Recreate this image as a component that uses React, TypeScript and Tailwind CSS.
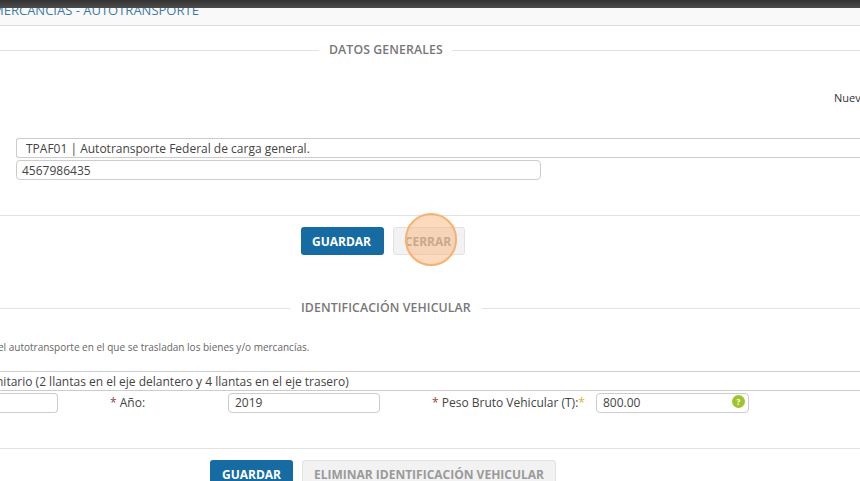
import React from 'react';

const Legend = ({ title, left, right }: { title: string; left: string; right: string }) => (
  <div className="flex items-center h-[20px]">
    <div className={`${left} h-px bg-[#e2e2e2]`}></div>
    <span className="text-[12.3px] font-semibold text-[#777777] whitespace-nowrap tracking-[0.1px]">{title}</span>
    <div className={`${right} h-px bg-[#e2e2e2] flex-1`}></div>
  </div>
);

const App: React.FC = () => {
  return (
    <div className="relative w-[860px] h-[481px] overflow-hidden bg-white text-[#444444] font-['Open_Sans',sans-serif]">
      {/* barra superior */}
      <div className="h-[8px] bg-gradient-to-b from-[#333333] to-[#4b4b4b]"></div>

      {/* encabezado */}
      <div className="h-[18px] overflow-hidden bg-[#f9f9f9] border-b border-[#dddddd]">
        <div className="-mt-[8px] -ml-[8px] text-[13px] leading-[20px] text-[#3d7ba6] whitespace-nowrap">
          MERCANCIAS - AUTOTRANSPORTE
        </div>
      </div>

      {/* datos generales */}
      <div className="mt-[14px]">
        <Legend title="DATOS GENERALES" left="w-[319px] mr-[10px]" right="ml-[9px]" />
      </div>
      <div className="mt-[30px] pl-[834px] text-[11px] leading-[16px] text-[#333333] whitespace-nowrap overflow-hidden">Nuevo</div>

      <div className="mt-[32px] ml-[16px] h-[20px] pl-[9px] pt-[2px] flex items-center border border-r-0 border-[#cccccc] rounded-l-[3px] text-[12px] text-[#444444] whitespace-nowrap">
        TPAF01 | Autotransporte Federal de carga general.
      </div>
      <div className="mt-[2px] ml-[16px] w-[525px] h-[20px] pl-[5px] pt-[2px] flex items-center border border-[#cccccc] rounded-[4px] text-[12px] text-[#444444]">
        4567986435
      </div>

      <div className="mt-[35px] h-px bg-[#e2e2e2]"></div>

      <div className="mt-[11px] flex pl-[301px] gap-[9px]">
        <button className="w-[83px] h-[28px] pt-[1px] pr-[2px] rounded-[3px] bg-[#166ba3] text-white text-[12px] font-bold">GUARDAR</button>
        <button className="w-[72px] h-[28px] pt-[1px] pr-[2px] rounded-[3px] bg-[#f2f2f2] border border-[#e2e2e2] text-[#9a9a9a] text-[12px] font-bold">CERRAR</button>
      </div>

      {/* identificación vehicular */}
      <div className="mt-[43px]">
        <Legend title="IDENTIFICACIÓN VEHICULAR" left="w-[290px] mr-[11px]" right="ml-[11px]" />
      </div>
      <div className="mt-[22px] -ml-[2px] text-[10px] leading-[14px] text-[#666666] whitespace-nowrap">
        el autotransporte en el que se trasladan los bienes y/o mercancías.
      </div>

      <div className="mt-[17px] h-[20px] pt-[2px] flex items-center border-y border-[#cccccc] overflow-hidden whitespace-nowrap text-[12px] text-[#444444]">
        <span className="-ml-[4px]">nitario (2 llantas en el eje delantero y 4 llantas en el eje trasero)</span>
      </div>

      <div className="mt-[2px] flex items-center h-[20px] text-[12px] whitespace-nowrap">
        <div className="w-[58px] h-[20px] border border-l-0 border-[#cccccc] rounded-r-[4px]"></div>
        <div className="w-[170px] pl-[52px]">
          <span className="text-[#a33a3a]">*</span> Año:
        </div>
        <div className="w-[152px] h-[20px] pl-[6px] flex items-center border border-[#cccccc] rounded-[4px]">2019</div>
        <div className="w-[216px] pl-[52px]">
          <span className="text-[#a33a3a]">*</span> Peso Bruto Vehicular (T):<span className="text-[#e0b040]">*</span>
        </div>
        <div className="w-[153px] h-[20px] pl-[6px] pr-[3px] flex items-center justify-between border border-[#cccccc] rounded-[4px]">
          800.00
          <span className="w-[13px] h-[13px] -mt-[3px] rounded-full bg-[#9fc42c] text-white text-[8px] font-bold leading-[13px] text-center">?</span>
        </div>
      </div>

      <div className="mt-[35px] h-px bg-[#e2e2e2]"></div>

      <div className="mt-[11px] flex pl-[210px] gap-[9px]">
        <button className="w-[83px] h-[28px] shrink-0 pt-[1px] rounded-[3px] bg-[#166ba3] text-white text-[12px] font-bold">GUARDAR</button>
        <button className="w-[254px] h-[28px] shrink-0 pt-[1px] rounded-[3px] bg-[#f2f2f2] border border-[#e2e2e2] text-[#9a9a9a] text-[12px] font-bold whitespace-nowrap">ELIMINAR IDENTIFICACIÓN VEHICULAR</button>
      </div>

      {/* resaltado del clic */}
      <div className="absolute left-[405px] top-[213px] w-[52px] h-[53px] rounded-full bg-[#f8b67c]/50 border-2 border-[#f7b273]"></div>
    </div>
  );
};

export default App;
